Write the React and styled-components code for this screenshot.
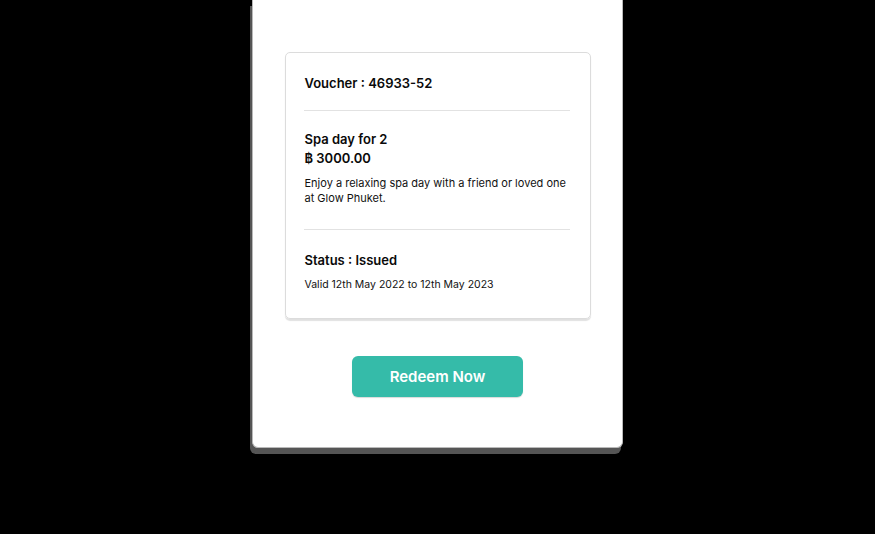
import React from 'react';
import styled, { createGlobalStyle } from 'styled-components';

const Global = createGlobalStyle`
    html, body {
        margin: 0;
        padding: 0;
        background: #000;
    }
    body {
        font-family: Inter, "Noto Sans", "Liberation Sans", sans-serif;
        color: #0a0a0a;
    }
`;

const Stage = styled.div`
    width: 875px;
    height: 534px;
    display: flex;
    justify-content: center;
    align-items: flex-start;
    background: #000;
`;

const Panel = styled.div`
    width: 371px;
    height: 448px;
    box-sizing: border-box;
    background: #fff;
    border: 1px solid #b9b9b9;
    border-top: none;
    border-radius: 0 0 6px 6px;
    box-shadow: -2px 6px 0 0 #555;
    display: flex;
    flex-direction: column;
    align-items: center;
    padding-top: 52px;
`;

const Card = styled.div`
    width: 306px;
    box-sizing: border-box;
    border: 1px solid #dcdcdc;
    border-radius: 5px;
    box-shadow: 0 2px 1px rgba(0, 0, 0, 0.12);
    padding: 0 20px 0 18px;
`;

const Section = styled.div`
    padding: ${p => p.pad || '0'};
    border-bottom: ${p => (p.last ? 'none' : '1px solid #e2e2e2')};
`;

const Heading = styled.div`
    padding-left: 1px;
    font-size: 13px;
    font-weight: 600;
    line-height: 20px;
`;

const Price = styled(Heading)`
    line-height: 19px;
`;

const Body = styled.p`
    margin: ${p => p.gap || '0'} 0 0;
    padding-left: 1px;
    font-size: ${p => p.size || '11px'};
    line-height: ${p => p.lh || '15px'};
    font-weight: 400;
    white-space: nowrap;
    color: #111;
`;

const Button = styled.button`
    margin-top: 37px;
    width: 171px;
    height: 41px;
    border: none;
    border-radius: 6px;
    background: #35bba9;
    box-shadow: 0 1px 1px rgba(0, 0, 0, 0.15);
    color: #fff;
    font-family: inherit;
    font-size: 15px;
    font-weight: 600;
    cursor: pointer;
`;

export default function App() {
    return (
        <Stage>
            <Global />
            <Panel>
                <Card>
                    <Section pad="20px 0 17px">
                        <Heading>Voucher : 46933-52</Heading>
                    </Section>
                    <Section pad="18px 0 23px">
                        <Heading>Spa day for 2</Heading>
                        <Price>฿ 3000.00</Price>
                        <Body gap="8px">
                            Enjoy a relaxing spa day with a friend or loved one
                            <br />
                            at Glow Phuket.
                        </Body>
                    </Section>
                    <Section last pad="20px 0 24px">
                        <Heading>Status : Issued</Heading>
                        <Body gap="6px" size="10.5px" lh="18px">Valid 12th May 2022 to 12th May 2023</Body>
                    </Section>
                </Card>
                <Button>Redeem Now</Button>
            </Panel>
        </Stage>
    );
}
